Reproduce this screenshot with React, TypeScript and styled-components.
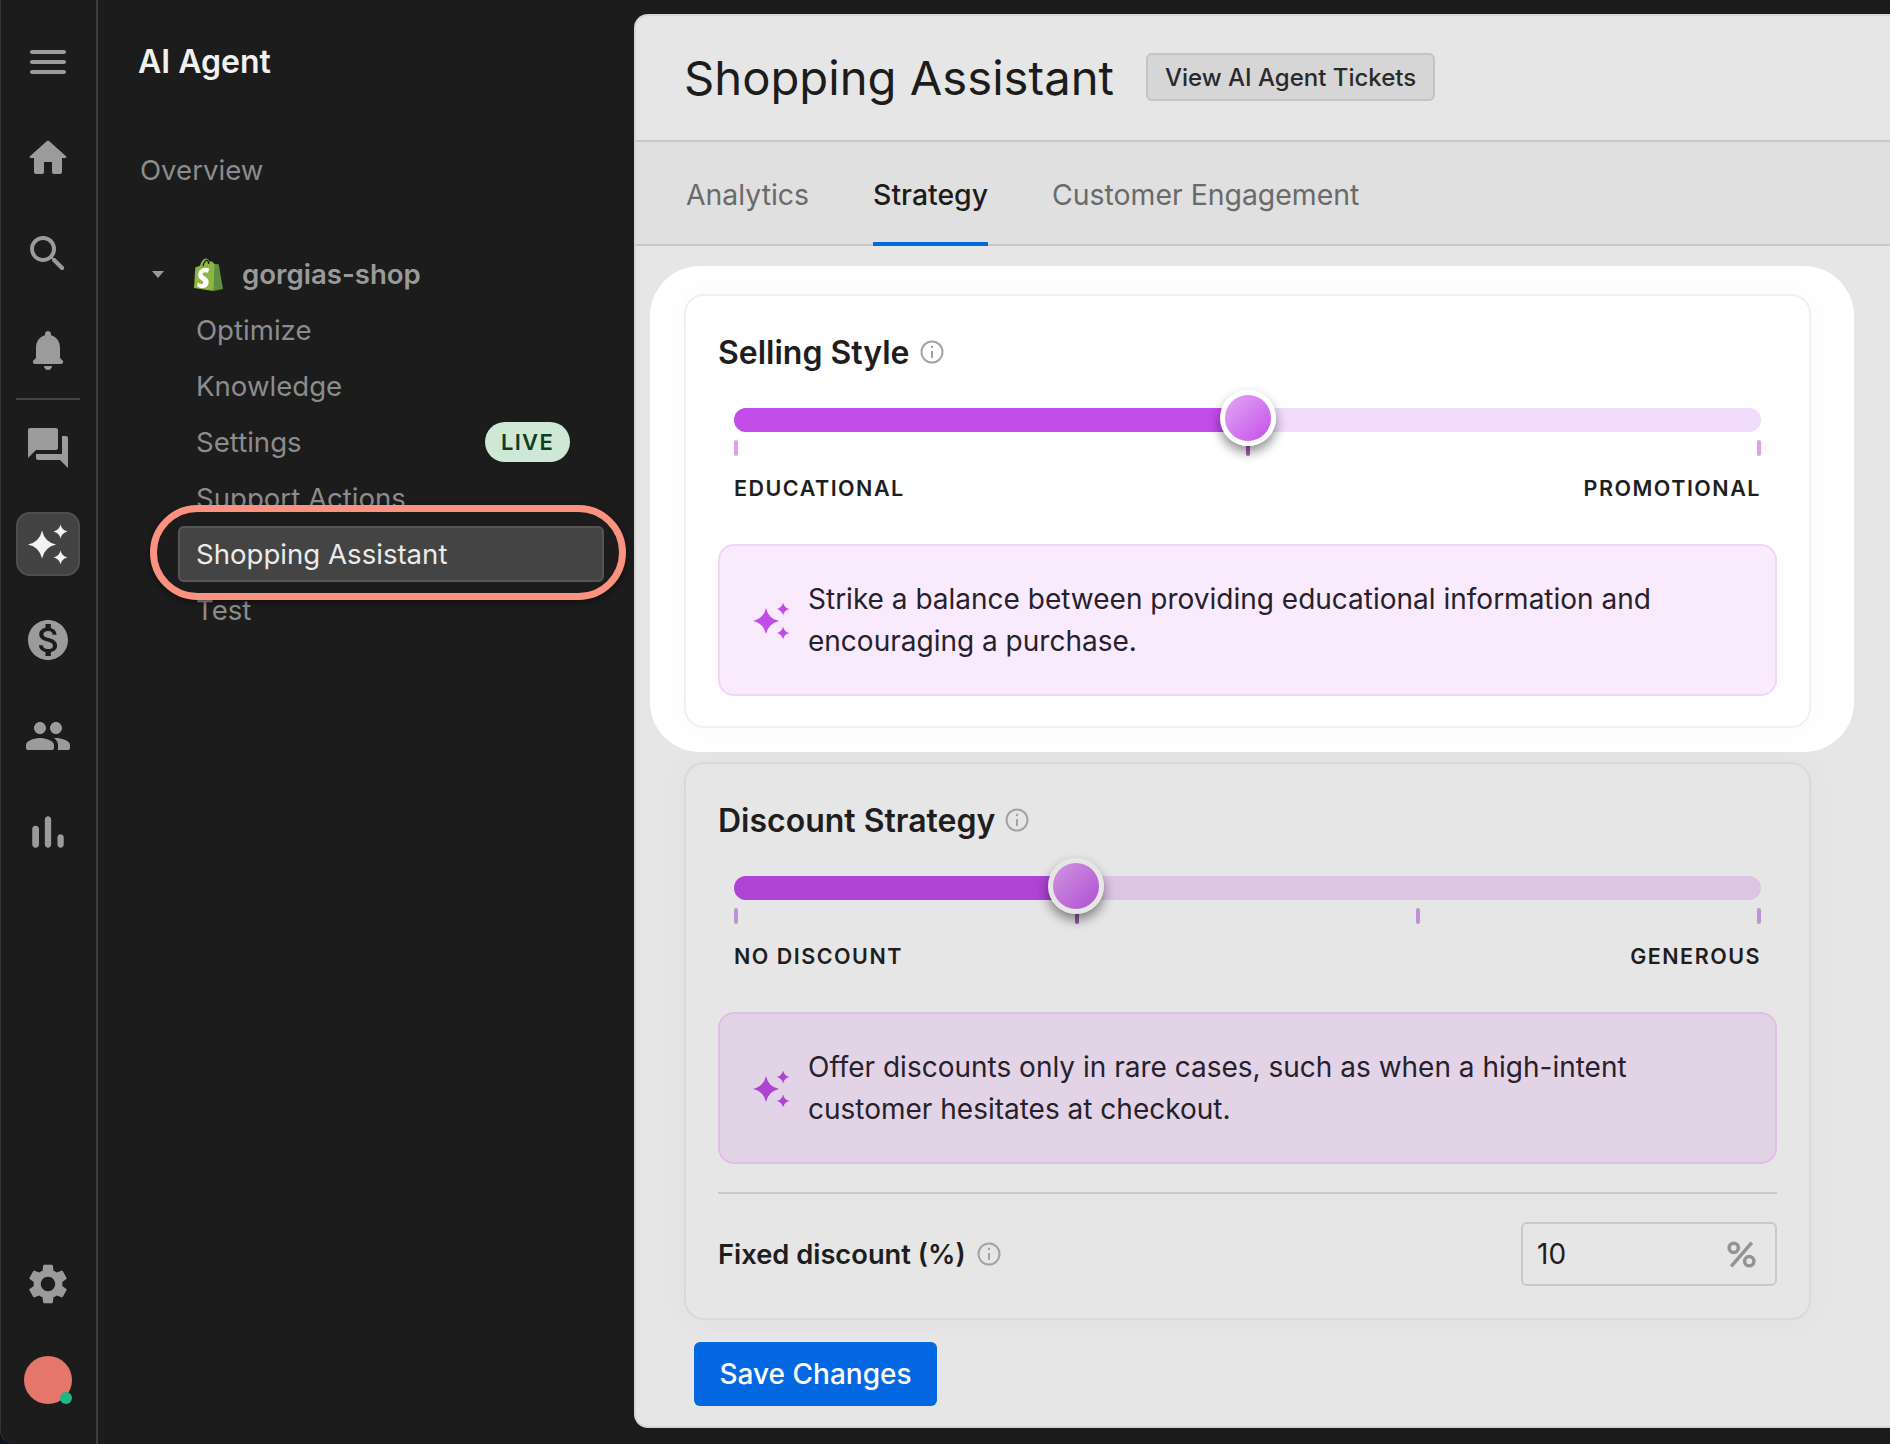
import styled, { createGlobalStyle } from 'styled-components';
import { MdMonetizationOn, MdSettings } from 'react-icons/md';

const GlobalStyle = createGlobalStyle`
  html, body {
    margin: 0;
    padding: 0;
    width: 1890px;
    height: 1444px;
    overflow: hidden;
    background: #0c1522;
  }
  * {
    box-sizing: border-box;
  }
  body {
    font-family: Inter, "Liberation Sans", sans-serif;
  }
`;

const Page = styled.div`
  display: flex;
  width: 1890px;
  height: 1444px;
  background: #1c1c1c;
  border-bottom-left-radius: 14px;
  box-shadow: inset 1px 0 0 #333;
`;

const Rail = styled.nav`
  width: 98px;
  flex-shrink: 0;
  display: flex;
  flex-direction: column;
  align-items: center;
  padding: 14px 0 16px;
  border-right: 2px solid #3d3d3d;
`;

const RailItem = styled.div`
  width: 96px;
  height: 96px;
  flex-shrink: 0;
  display: flex;
  align-items: center;
  justify-content: center;
  color: #9b9b9b;
`;

const ActiveRailBox = styled.div`
  width: 64px;
  height: 64px;
  border-radius: 14px;
  background: #434343;
  border: 2px solid #4f4f4f;
  color: #f2f2f2;
  display: flex;
  align-items: center;
  justify-content: center;
`;

const RailDivider = styled.div`
  width: 64px;
  height: 2px;
  flex-shrink: 0;
  background: #444;
`;

const RailSpacer = styled.div`
  flex: 1;
`;

const Avatar = styled.div`
  position: relative;
  width: 48px;
  height: 48px;
  border-radius: 50%;
  background: #e5766a;
  &::after {
    content: '';
    position: absolute;
    right: 0;
    bottom: 0;
    width: 12px;
    height: 12px;
    border-radius: 50%;
    background: #1fb78a;
  }
`;

const SideNav = styled.aside`
  width: 536px;
  flex-shrink: 0;
  padding: 39px 0 0 40px;
  display: flex;
  flex-direction: column;
`;

const SideTitle = styled.h2`
  margin: 0;
  height: 46px;
  line-height: 46px;
  font-size: 32px;
  font-weight: 600;
  color: #f0f0f0;
`;

const OverviewLink = styled.div`
  margin: 62px 0 0 2px;
  height: 46px;
  line-height: 46px;
  font-size: 27.6px;
  color: #8c8c8c;
`;

const ShopRow = styled.div`
  margin: 58px 0 0 14px;
  height: 46px;
  display: flex;
  align-items: center;
  font-size: 27.6px;
  font-weight: 600;
  color: #9a9a9a;
`;

const Caret = styled.span`
  width: 0;
  height: 0;
  border-left: 6px solid transparent;
  border-right: 6px solid transparent;
  border-top: 7px solid #9a9a9a;
  margin-right: 30px;
`;

const ShopName = styled.span`
  margin-left: 19px;
`;

const SubList = styled.div`
  margin: 5px 0 0 40px;
  width: 426px;
  display: flex;
  flex-direction: column;
`;

const SubItem = styled.div<{ $active?: boolean }>`
  position: relative;
  height: 56px;
  padding: 0 18px;
  display: flex;
  align-items: center;
  justify-content: space-between;
  font-size: 27.6px;
  color: ${(p) => (p.$active ? '#ebebeb' : '#8c8c8c')};
  border-radius: 6px;
  ${(p) =>
    p.$active
      ? `
    z-index: 1;
    isolation: isolate;
    &::before {
      content: '';
      position: absolute;
      z-index: -2;
      left: -28px;
      right: -22px;
      top: -21px;
      bottom: -18px;
      border-radius: 48px;
      background: #1c1c1c;
      border: 7px solid #fb9280;
      box-shadow: 0 2px 6px rgba(0, 0, 0, 0.5);
    }
    &::after {
      content: '';
      position: absolute;
      z-index: -1;
      inset: 0;
      border-radius: 6px;
      background: #444444;
      box-shadow: inset 0 0 0 2px #555555;
    }
  `
      : ''}
`;

const LiveBadge = styled.span`
  margin-right: 16px;
  width: 85px;
  height: 40px;
  border-radius: 20px;
  background: #cfe8d5;
  color: #0f3d22;
  font-size: 22px;
  font-weight: 600;
  letter-spacing: 1.3px;
  display: flex;
  align-items: center;
  justify-content: center;
`;

const Panel = styled.main`
  flex: 1;
  margin: 14px 0 16px;
  border: 2px solid #d6d6d6;
  border-right: none;
  border-radius: 14px 0 0 14px;
  background: #e6e6e6;
  display: flex;
  flex-direction: column;
  overflow: hidden;
`;

const PanelHeader = styled.header`
  height: 126px;
  flex-shrink: 0;
  padding: 0 0 2px 48px;
  display: flex;
  align-items: center;
  gap: 32px;
  border-bottom: 2px solid #c8c8c8;
`;

const PageTitle = styled.h1`
  margin: 0;
  font-size: 47.2px;
  font-weight: 400;
  color: #1c1c1c;
`;

const GhostButton = styled.button`
  height: 48px;
  padding: 0 17px;
  border-radius: 6px;
  border: 2px solid #c4c4c4;
  background: #d6d6d6;
  color: #2a2a2a;
  font-family: inherit;
  font-size: 24px;
  font-weight: 500;
`;

const TabBar = styled.div`
  height: 104px;
  flex-shrink: 0;
  padding-left: 50px;
  display: flex;
  gap: 64px;
  background: #e0e0e0;
  border-bottom: 2px solid #c8c8c8;
`;

const Tab = styled.div<{ $active?: boolean }>`
  height: 104px;
  display: flex;
  align-items: center;
  padding-top: 4px;
  font-size: 28.4px;
  font-weight: ${(p) => (p.$active ? 500 : 400)};
  color: ${(p) => (p.$active ? '#1c1c1c' : '#6a6a6a')};
  border-bottom: 4px solid ${(p) => (p.$active ? '#0468e2' : 'transparent')};
`;

const Content = styled.div`
  flex: 1;
  padding: 20px 0 0 14px;
`;

const Spotlight = styled.div`
  position: relative;
  z-index: 1;
  width: 1204px;
  height: 486px;
  padding: 28px 34px 0;
  margin-bottom: 10px;
  background: #fff;
  border-radius: 50px;
`;

const Card = styled.section<{ $dim?: boolean }>`
  width: 1127px;
  margin-left: ${(p) => (p.$dim ? '34px' : '0')};
  padding: 0 32px;
  border-radius: 20px;
  border: 2px solid ${(p) => (p.$dim ? '#d9d9d9' : '#f0f0f0')};
  background: ${(p) => (p.$dim ? '#e6e6e6' : '#fff')};
  height: ${(p) => (p.$dim ? '558px' : '434px')};
  box-shadow: 0 0 30px 4px rgba(0, 0, 0, 0.025);
`;

const CardTitle = styled.h3`
  margin: 0;
  padding-top: 24px;
  height: 88px;
  display: flex;
  align-items: center;
  gap: 10px;
  font-size: 32px;
  font-weight: 600;
  color: #1e1e1e;
`;

const InfoIcon = () => (
  <svg width="24" height="24" viewBox="0 0 24 24" fill="none" stroke="#a3a3a3" strokeWidth="2">
    <circle cx="12" cy="12" r="10.5" />
    <path d="M12 11v7" />
    <circle cx="12" cy="7" r="1.2" fill="#a3a3a3" stroke="none" />
  </svg>
);

const SliderBox = styled.div`
  position: relative;
  margin: 24px 16px 0;
  height: 48px;
`;

const Track = styled.div<{ $color: string }>`
  height: 24px;
  border-radius: 12px;
  background: ${(p) => p.$color};
  overflow: hidden;
`;

const TrackFill = styled.div<{ $color: string }>`
  height: 100%;
  background: ${(p) => p.$color};
`;

const Ticks = styled.div`
  margin-top: 8px;
  display: flex;
  justify-content: space-between;
`;

const Tick = styled.span<{ $color: string }>`
  width: 4px;
  height: 16px;
  border-radius: 2px;
  background: ${(p) => p.$color};
`;

const Thumb = styled.div<{ $rim: string; $from: string; $to: string }>`
  position: absolute;
  top: -18px;
  width: 56px;
  height: 56px;
  margin-left: -28px;
  border-radius: 50%;
  border: 5px solid ${(p) => p.$rim};
  background: linear-gradient(135deg, ${(p) => p.$from}, ${(p) => p.$to});
  box-shadow: 0 6px 12px rgba(0, 0, 0, 0.45);
`;

const SliderLabels = styled.div`
  margin: 16px 16px 0;
  height: 32px;
  display: flex;
  align-items: center;
  justify-content: space-between;
  font-size: 21.5px;
  font-weight: 600;
  letter-spacing: 1.5px;
  color: #1e1e1e;
`;

const Hint = styled.div<{ $dim?: boolean }>`
  margin-top: 40px;
  height: 152px;
  padding: 0 33px;
  display: flex;
  align-items: center;
  gap: 18px;
  border-radius: 16px;
  border: 2px solid ${(p) => (p.$dim ? '#e0bfe6' : '#f2d5fb')};
  background: ${(p) => (p.$dim ? '#e3d3e7' : '#f9eafe')};
  font-size: 28px;
  line-height: 42px;
  color: #26212a;
`;

const HintIcon = styled.svg`
  flex-shrink: 0;
  width: 37px;
  height: 37px;
`;

const Divider = styled.div`
  margin-top: 28px;
  height: 2px;
  background: #cacaca;
`;

const FixedRow = styled.div`
  margin-top: 28px;
  display: flex;
  align-items: center;
  justify-content: space-between;
`;

const FixedLabel = styled.div`
  display: flex;
  align-items: center;
  gap: 11px;
  font-size: 27.3px;
  font-weight: 600;
  color: #1e1e1e;
`;

const PercentField = styled.div`
  width: 256px;
  height: 64px;
  padding: 0 18px 0 14px;
  display: flex;
  align-items: center;
  justify-content: space-between;
  border: 2px solid #c9c9c9;
  border-radius: 6px;
  font-size: 28px;
  color: #1e1e1e;
`;

const SaveButton = styled.button`
  display: block;
  position: relative;
  margin: 22px 0 0 44px;
  width: 243px;
  height: 64px;
  border: none;
  border-radius: 6px;
  background: #0468e2;
  color: #fff;
  font-family: inherit;
  font-size: 28px;
  font-weight: 500;
  box-shadow: 0 0 0 8px #e6e6e6;
`;

const Glyph = ({ d, size = 48 }: { d: string; size?: number }) => (
  <svg width={size} height={size} viewBox="0 0 24 24" fill="currentColor">
    <path d={d} />
  </svg>
);

const star = (cx: number, cy: number, r: number) => {
  const k = r * 0.18;
  return `M${cx} ${cy - r}Q${cx + k} ${cy - k} ${cx + r} ${cy}Q${cx + k} ${cy + k} ${cx} ${cy + r}Q${cx - k} ${cy + k} ${cx - r} ${cy}Q${cx - k} ${cy - k} ${cx} ${cy - r}Z`;
};

const sparkles = `${star(8.43, 12.3, 8.43)}${star(19.5, 4.55, 4.2)}${star(19.5, 20.1, 4.2)}`;

const Sparkle = () => (
  <HintIcon viewBox="0 0 24 24" fill="#c14ce8">
    <path d={sparkles} />
  </HintIcon>
);

const DimSparkle = () => (
  <HintIcon viewBox="0 0 24 24" fill="#ad44d2">
    <path d={sparkles} />
  </HintIcon>
);

const ShopifyBag = () => (
  <svg width="29" height="33" viewBox="0 0 29 33">
    <path d="M24 6.5l-3.5-.5-2.5-2.5c-.3-.3-.7-.2-.9-.1L15.7 3.8C15 1.8 13.7.4 12 .4 8.8.4 6.8 4.7 6 7.8L2.5 8.9C1.5 9.2 1.4 9.3 1.3 10.2L0 30l19.5 3L24 6.5z" fill="#8db543" />
    <path d="M20.5 6l-1 27L29 31 24.8 6.8c-.1-.4-.4-.5-.7-.6L20.5 6z" fill="#5e8e3e" />
    <path d="M15 11.5l-1 3.3c-.9-.4-2-.7-3-.6-2.4.2-2.4 1.6-2.4 2.1.1 2 5.7 2.5 6 7.3.3 3.7-2 6.3-5.4 6.5-4 .3-6.2-2.1-6.2-2.1l.8-3.5s2.2 1.6 3.9 1.5c1.1-.1 1.5-1 1.5-1.6-.2-2.7-4.8-2.5-5-6.9-.3-3.7 2.2-7.5 7.6-7.8 2-.1 3.2.8 3.2.8z" fill="#fff" />
    <path d="M9 8c.8-2.9 2-5.5 3.5-6 1.5.5 2.2 2.5 2.2 4" fill="none" stroke="#1c1c1c" strokeWidth="1.3" />
  </svg>
);

const PercentGlyph = () => (
  <svg width="31" height="29" viewBox="0 0 30 27" fill="none" stroke="#949494" strokeWidth="3.4">
    <path d="M25 2L5 25" />
    <circle cx="7.5" cy="7" r="4.5" />
    <circle cx="22.5" cy="20" r="4.5" />
  </svg>
);

const icons = {
  home: 'M10 19v-5h4v5c0 .55.45 1 1 1h3c.55 0 1-.45 1-1v-7h1.7c.46 0 .68-.57.33-.87L12.67 3.6c-.38-.34-.96-.34-1.34 0l-8.36 7.53c-.34.3-.13.87.33.87H5v7c0 .55.45 1 1 1h3c.55 0 1-.45 1-1z',
  search: 'M15.5 14h-.79l-.28-.27c1.2-1.4 1.82-3.31 1.48-5.34-.47-2.78-2.79-5-5.59-5.34-4.2-.52-7.75 3.02-7.22 7.22.34 2.8 2.56 5.12 5.34 5.59 2.03.34 3.94-.28 5.34-1.48l.27.28v.79l4.25 4.25c.41.41 1.08.41 1.49 0 .41-.41.41-1.08 0-1.49L15.5 14zm-6 0C7.01 14 5 11.99 5 9.5S7.01 5 9.5 5 14 7.01 14 9.5 11.99 14 9.5 14z',
  bell: 'M12 22c1.1 0 2-.9 2-2h-4c0 1.1.9 2 2 2zm6-6v-5c0-3.07-1.63-5.64-4.5-6.32V4c0-.83-.67-1.5-1.5-1.5s-1.5.67-1.5 1.5v.68C7.64 5.36 6 7.92 6 11v5l-1.29 1.29c-.63.63-.19 1.71.7 1.71h13.17c.89 0 1.34-1.08.71-1.71L18 16z',
  forum: 'M21 6h-2v9H6v2c0 .55.45 1 1 1h11l4 4V7c0-.55-.45-1-1-1zm-4 6V3c0-.55-.45-1-1-1H3c-.55 0-1 .45-1 1v14l4-4h10c.55 0 1-.45 1-1z',
  people: 'M16 11c1.66 0 2.99-1.34 2.99-3S17.66 5 16 5s-3 1.34-3 3 1.34 3 3 3zm-8 0c1.66 0 2.99-1.34 2.99-3S9.66 5 8 5 5 6.34 5 8s1.34 3 3 3zm0 2c-2.33 0-7 1.17-7 3.5V18c0 .55.45 1 1 1h12c.55 0 1-.45 1-1v-1.5c0-2.33-4.67-3.5-7-3.5zm8 0c-.29 0-.62.02-.97.05.02.01.03.03.04.04 1.14.83 1.93 1.94 1.93 3.41V18c0 .35-.07.69-.18 1H22c.55 0 1-.45 1-1v-1.5c0-2.33-4.67-3.5-7-3.5z',
  bars: 'M6.4 9.2h.2c.77 0 1.4.63 1.4 1.4v7c0 .77-.63 1.4-1.4 1.4h-.2c-.77 0-1.4-.63-1.4-1.4v-7c0-.77.63-1.4 1.4-1.4zM12 5c.77 0 1.4.63 1.4 1.4v11.2c0 .77-.63 1.4-1.4 1.4s-1.4-.63-1.4-1.4V6.4c0-.77.63-1.4 1.4-1.4zm5.6 8c.77 0 1.4.63 1.4 1.4v3.2c0 .77-.63 1.4-1.4 1.4s-1.4-.63-1.4-1.4v-3.2c0-.77.63-1.4 1.4-1.4z',
  menu: 'M4 18h16c.55 0 1-.45 1-1s-.45-1-1-1H4c-.55 0-1 .45-1 1s.45 1 1 1zm0-5h16c.55 0 1-.45 1-1s-.45-1-1-1H4c-.55 0-1 .45-1 1s.45 1 1 1zM3 7c0 .55.45 1 1 1h16c.55 0 1-.45 1-1s-.45-1-1-1H4c-.55 0-1 .45-1 1z',
};

export default function App() {
  return (
    <Page>
      <GlobalStyle />
      <Rail>
        <RailItem><Glyph d={icons.menu} /></RailItem>
        <RailItem><Glyph d={icons.home} /></RailItem>
        <RailItem><Glyph d={icons.search} /></RailItem>
        <RailItem><Glyph d={icons.bell} /></RailItem>
        <RailDivider />
        <RailItem><Glyph d={icons.forum} /></RailItem>
        <RailItem>
          <ActiveRailBox><Glyph d={sparkles} size={40} /></ActiveRailBox>
        </RailItem>
        <RailItem><MdMonetizationOn size={48} /></RailItem>
        <RailItem><Glyph d={icons.people} /></RailItem>
        <RailItem><Glyph d={icons.bars} size={54} /></RailItem>
        <RailSpacer />
        <RailItem><MdSettings size={48} /></RailItem>
        <RailItem><Avatar /></RailItem>
      </Rail>

      <SideNav>
        <SideTitle>AI Agent</SideTitle>
        <OverviewLink>Overview</OverviewLink>
        <ShopRow>
          <Caret />
          <ShopifyBag />
          <ShopName>gorgias-shop</ShopName>
        </ShopRow>
        <SubList>
          <SubItem>Optimize</SubItem>
          <SubItem>Knowledge</SubItem>
          <SubItem>Settings<LiveBadge>LIVE</LiveBadge></SubItem>
          <SubItem>Support Actions</SubItem>
          <SubItem $active>Shopping Assistant</SubItem>
          <SubItem>Test</SubItem>
        </SubList>
      </SideNav>

      <Panel>
        <PanelHeader>
          <PageTitle>Shopping Assistant</PageTitle>
          <GhostButton>View AI Agent Tickets</GhostButton>
        </PanelHeader>
        <TabBar>
          <Tab>Analytics</Tab>
          <Tab $active>Strategy</Tab>
          <Tab>Customer Engagement</Tab>
        </TabBar>
        <Content>
          <Spotlight>
            <Card>
              <CardTitle>Selling Style <InfoIcon /></CardTitle>
              <SliderBox>
                <Track $color="#f1dcfb">
                  <TrackFill $color="#c14ce8" style={{ width: '50%' }} />
                </Track>
                <Ticks>
                  <Tick $color="#dca0f0" />
                  <Tick $color="#a060b8" />
                  <Tick $color="#dca0f0" />
                </Ticks>
                <Thumb $rim="#fff" $from="#e3a8f6" $to="#c54fe8" style={{ left: '50%' }} />
              </SliderBox>
              <SliderLabels>
                <span>EDUCATIONAL</span>
                <span>PROMOTIONAL</span>
              </SliderLabels>
              <Hint>
                <Sparkle />
                <span>Strike a balance between providing educational information and encouraging a purchase.</span>
              </Hint>
            </Card>
          </Spotlight>
          <Card $dim>
            <CardTitle>Discount Strategy <InfoIcon /></CardTitle>
            <SliderBox>
              <Track $color="#dcc5e3">
                <TrackFill $color="#ae43d4" style={{ width: '33.3%' }} />
              </Track>
              <Ticks>
                <Tick $color="#c58fd8" />
                <Tick $color="#8f5a9f" />
                <Tick $color="#c58fd8" />
                <Tick $color="#c58fd8" />
              </Ticks>
              <Thumb $rim="#e6e6e6" $from="#cf96e0" $to="#b04ed2" style={{ left: '33.3%' }} />
            </SliderBox>
            <SliderLabels>
              <span>NO DISCOUNT</span>
              <span>GENEROUS</span>
            </SliderLabels>
            <Hint $dim>
              <DimSparkle />
              <span>Offer discounts only in rare cases, such as when a high-intent customer hesitates at checkout.</span>
            </Hint>
            <Divider />
            <FixedRow>
              <FixedLabel>Fixed discount (%) <InfoIcon /></FixedLabel>
              <PercentField>10<PercentGlyph /></PercentField>
            </FixedRow>
          </Card>
          <SaveButton>Save Changes</SaveButton>
        </Content>
      </Panel>
    </Page>
  );
}
